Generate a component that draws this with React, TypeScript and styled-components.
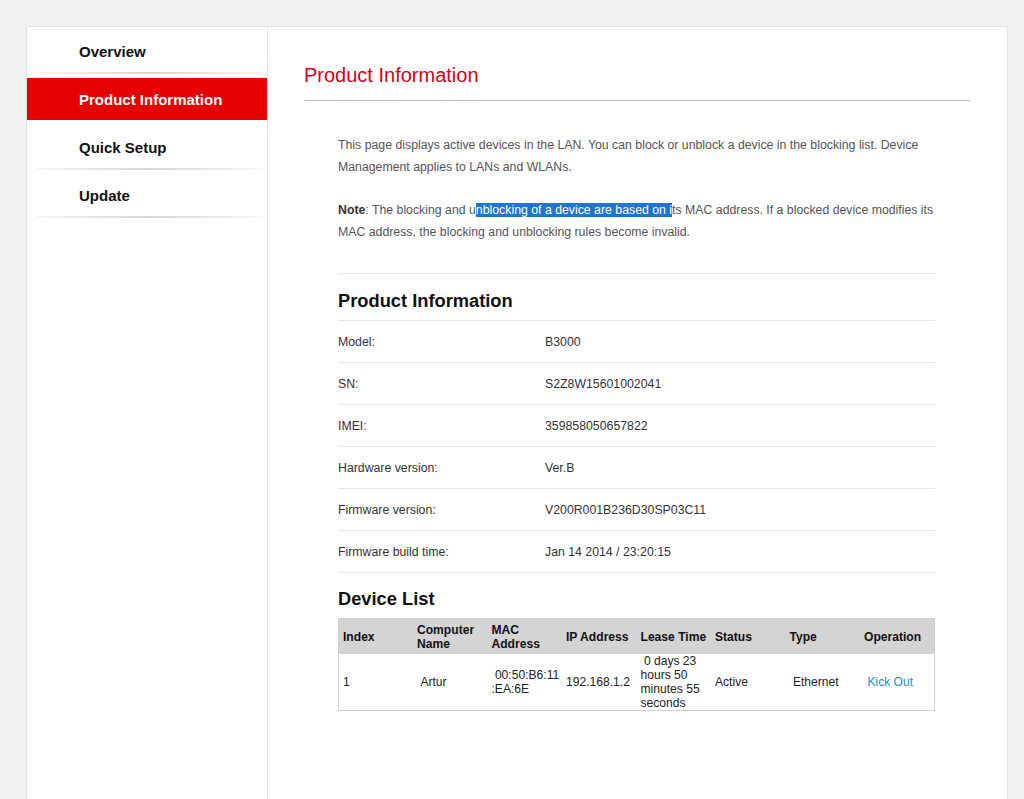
import React from "react";
import styled, { createGlobalStyle } from "styled-components";

const Global = createGlobalStyle`
  html, body { margin: 0; padding: 0; background: #f2f2f2; }
  body { font-family: "Liberation Sans", Arial, sans-serif; overflow: hidden; }
`;

const Page = styled.div`
  padding: 26px 16px 0 26px;
  height: 799px;
  box-sizing: border-box;
`;

const Card = styled.div`
  display: flex;
  background: #fff;
  border: 1px solid #e2e2e2;
  border-bottom: none;
  min-height: 800px;
`;

const Sidebar = styled.nav`
  width: 240px;
  flex: none;
  border-right: 1px solid #e6e6e6;
  padding-top: 3px;
`;

const NavItem = styled.div<{ $active?: boolean }>`
  height: 42px;
  display: flex;
  align-items: center;
  padding-left: 52px;
  font-size: 15px;
  font-weight: bold;
  color: ${(p) => (p.$active ? "#fff" : "#111")};
  background: ${(p) => (p.$active ? "#e60000" : "transparent")};
`;

const NavDivider = styled.div<{ $hidden?: boolean }>`
  height: 2px;
  margin: 0 4px 4px 8px;
  background: ${(p) =>
    p.$hidden
      ? "transparent"
      : "linear-gradient(to right, rgba(220,220,220,0.2), #d6d6d6 50%, rgba(220,220,220,0.2))"};
`;

const Main = styled.main`
  flex: 1;
  padding: 36px 37px 0 36px;
`;

const Title = styled.h1`
  margin: 0;
  font-size: 20px;
  font-weight: normal;
  line-height: 24px;
  color: #d8001a;
  padding-bottom: 13px;
  border-bottom: 1px solid #bdbdbd;
`;

const Content = styled.div`
  padding: 33px 35px 0 34px;
`;

const Para = styled.p`
  margin: 0 0 21px 0;
  font-size: 12.3px;
  line-height: 22px;
  color: #555;
`;

const Strong = styled.b`
  color: #333;
`;

const Selected = styled.span`
  background: #1f76d2;
  color: #fff;
`;

const Section = styled.section`
  margin-top: 30px;
  border-top: 1px solid #e6e6e6;
`;

const SectionTitle = styled.h2`
  margin: 0;
  font-size: 18.3px;
  font-weight: bold;
  color: #111;
  line-height: 20px;
  padding: 17px 0 9px;
  border-bottom: 1px solid #e6e6e6;
`;

const InfoTable = styled.table`
  width: 100%;
  table-layout: fixed;
  border-collapse: collapse;
  font-size: 12.3px;
  color: #333;
`;

const InfoRow = styled.tr`
  border-bottom: 1px solid #e6e6e6;
`;

const InfoCell = styled.td<{ $label?: boolean }>`
  height: 41px;
  padding: 0;
  vertical-align: middle;
  width: ${(p) => (p.$label ? "207px" : "auto")};
`;

const ListTitle = styled.h2`
  margin: 0;
  font-size: 18.3px;
  font-weight: bold;
  color: #111;
  line-height: 22px;
  padding: 15px 0 8px;
`;

const Table = styled.table`
  width: 100%;
  table-layout: fixed;
  border-collapse: collapse;
  border: 1px solid #d0d0d0;
  font-size: 12.1px;
  color: #222;
`;

const Th = styled.th`
  background: #d4d4d4;
  text-align: left;
  font-weight: bold;
  color: #111;
  height: 35px;
  padding: 0 1px 0 4px;
  line-height: 14px;
`;

const Td = styled.td`
  padding: 0 1px 0 4px;
  line-height: 14px;
  height: 56px;
  vertical-align: middle;
  white-space: pre-wrap;
`;

const Link = styled.a`
  color: #2f8ad2;
  text-decoration: none;
`;

const info: [string, string][] = [
  ["Model:", "B3000"],
  ["SN:", "S2Z8W15601002041"],
  ["IMEI:", "359858050657822"],
  ["Hardware version:", "Ver.B"],
  ["Firmware version:", "V200R001B236D30SP03C11"],
  ["Firmware build time:", "Jan 14 2014 / 23:20:15"],
];

const nav = ["Overview", "Product Information", "Quick Setup", "Update"];

export default function App() {
  return (
    <>
      <Global />
      <Page>
        <Card>
          <Sidebar>
            {nav.map((n) => (
              <React.Fragment key={n}>
                <NavItem $active={n === "Product Information"}>{n}</NavItem>
                <NavDivider $hidden={n === "Product Information"} />
              </React.Fragment>
            ))}
          </Sidebar>
          <Main>
            <Title>Product Information</Title>
            <Content>
              <Para>
                This page displays active devices in the LAN. You can block or unblock a device in the blocking list. Device
                Management applies to LANs and WLANs.
              </Para>
              <Para>
                <Strong>Note</Strong>: The blocking and u
                <Selected>nblocking of a device are based on i</Selected>
                ts MAC address. If a blocked device modifies its MAC address, the blocking and unblocking rules become invalid.
              </Para>
              <Section>
                <SectionTitle>Product Information</SectionTitle>
                <InfoTable>
                  <tbody>
                    {info.map(([k, v]) => (
                      <InfoRow key={k}>
                        <InfoCell $label>{k}</InfoCell>
                        <InfoCell>{v}</InfoCell>
                      </InfoRow>
                    ))}
                  </tbody>
                </InfoTable>
              </Section>
              <ListTitle>Device List</ListTitle>
              <Table>
                <thead>
                  <tr>
                    <Th>Index</Th>
                    <Th>Computer Name</Th>
                    <Th>MAC Address</Th>
                    <Th>IP Address</Th>
                    <Th>Lease Time</Th>
                    <Th>Status</Th>
                    <Th>Type</Th>
                    <Th>Operation</Th>
                  </tr>
                </thead>
                <tbody>
                  <tr>
                    <Td>1</Td>
                    <Td> Artur</Td>
                    <Td>
                      {" 00:50:B6:11"}
                      <wbr />
                      {":EA:6E"}
                    </Td>
                    <Td>192.168.1.2</Td>
                    <Td> 0 days 23 hours 50 minutes 55 seconds</Td>
                    <Td>Active</Td>
                    <Td> Ethernet</Td>
                    <Td>
                      {" "}
                      <Link href="#">Kick Out</Link>
                    </Td>
                  </tr>
                </tbody>
              </Table>
            </Content>
          </Main>
        </Card>
      </Page>
    </>
  );
}
